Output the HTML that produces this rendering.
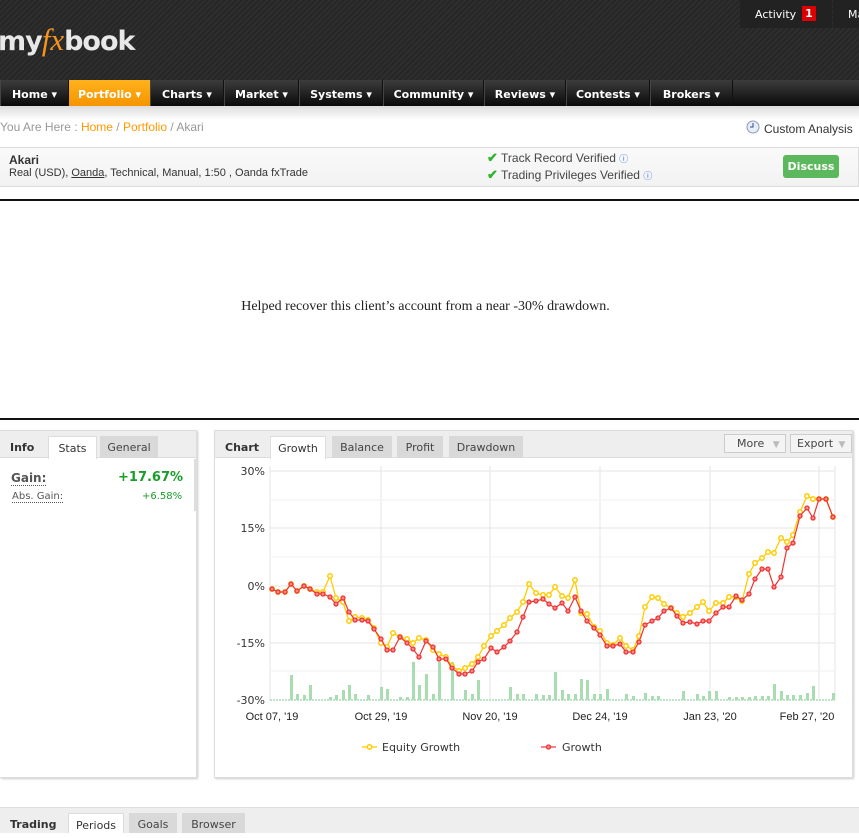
<!DOCTYPE html>
<html><head><meta charset="utf-8">
<style>
*{margin:0;padding:0;box-sizing:border-box}
body{width:859px;height:833px;overflow:hidden;background:#fff;font-family:"DejaVu Sans","Liberation Sans",sans-serif;position:relative}
.abs{position:absolute}
#hdr{left:0;top:0;width:859px;height:80px;background:repeating-linear-gradient(135deg,#2e2e2e 0 2px,#262626 2px 4px)}
#logo{left:-2px;top:22px;font:bold 27px "DejaVu Sans",sans-serif;color:#e8e8e8;letter-spacing:-1px}
#logo i{color:#f7941d;font-family:"Liberation Serif",serif;font-style:italic;font-weight:normal;font-size:31px;letter-spacing:0}
#act{left:740px;top:0;width:92px;height:28px;background:#222;color:#fff;font-size:11px;padding:8px 0 0 15px}
#act b{position:absolute;left:62px;top:6px;width:14px;height:15px;background:#d00;color:#fff;text-align:center;font-size:11px;line-height:15px}
#ma{left:833px;top:0;width:30px;height:28px;background:#222;color:#fff;font-size:11px;padding:8px 0 0 15px}
#nav{left:0;top:80px;width:859px;height:26px;background:linear-gradient(#3c3c3c,#0a0a0a)}
#nav div{position:absolute;top:0;height:26px;color:#fff;font-weight:bold;font-size:11px;line-height:29px;text-align:center;border-right:1px solid #111;border-left:1px solid #444}
#nav .on{background:linear-gradient(#ffb21c,#f59400);border:none}
#crumb{left:0;top:106px;width:859px;height:40px;background:linear-gradient(#ddd,#fff 14px)}
#crumb span.t{position:absolute;left:0;top:14px;font-size:12px;color:#999;font-family:"Liberation Sans",sans-serif}
#crumb a{color:#f90;text-decoration:none}
#info{left:0;top:147px;width:859px;height:40px;border:1px solid #ddd;border-left:none;background:linear-gradient(#fafafa,#f2f2f2)}
.ck{color:#2db52d;font-weight:bold;font-size:13px}
</style></head><body>
<div id="hdr" class="abs"></div>
<div id="logo" class="abs">my<i>fx</i>book</div>
<div id="act" class="abs">Activity<b>1</b></div>
<div id="ma" class="abs">Ma</div>
<div id="nav" class="abs">
<div style="left:0;width:69px">Home ▾</div>
<div class="on" style="left:69px;width:81px">Portfolio ▾</div>
<div style="left:150px;width:74px">Charts ▾</div>
<div style="left:224px;width:75px">Market ▾</div>
<div style="left:299px;width:84px">Systems ▾</div>
<div style="left:383px;width:101px">Community ▾</div>
<div style="left:484px;width:82px">Reviews ▾</div>
<div style="left:566px;width:84px">Contests ▾</div>
<div style="left:650px;width:83px">Brokers ▾</div>
</div>
<div id="crumb" class="abs"><span class="t">You Are Here : <a>Home</a> / <a>Portfolio</a> / Akari</span>
<svg class="abs" style="left:746px;top:14px" width="14" height="14"><circle cx="7" cy="7" r="6" fill="#e8eef8" stroke="#8a9ab8"/><path d="M7 3V7H4" stroke="#2a4a9a" fill="none"/></svg>
<span class="abs" style="left:764px;top:16px;font:12px 'Liberation Sans',sans-serif;color:#333">Custom Analysis</span></div>
<div id="info" class="abs">
<div class="abs" style="left:9px;top:5px;font:bold 12px 'Liberation Sans',sans-serif;color:#333">Akari</div>
<div class="abs" style="left:9px;top:19px;font:11px 'Liberation Sans',sans-serif;color:#333">Real (USD), <u>Oanda</u>, Technical, Manual, 1:50 , Oanda fxTrade</div>
<div class="abs" style="left:487px;top:2px;font:12px 'Liberation Sans',sans-serif;color:#444"><span class="ck">✔</span> Track Record Verified <span style="color:#36c;font-size:9px">ⓘ</span></div>
<div class="abs" style="left:487px;top:19px;font:12px 'Liberation Sans',sans-serif;color:#444"><span class="ck">✔</span> Trading Privileges Verified <span style="color:#36c;font-size:9px">ⓘ</span></div>
<div class="abs" style="left:783px;top:7px;width:56px;height:23px;background:#5cb85c;border-radius:3px;color:#fff;font-weight:bold;font-size:11px;text-align:center;line-height:23px">Discuss</div>
</div>
<div class="abs" style="left:0;top:199px;width:859px;height:2px;background:#111"></div>
<div class="abs" style="left:0;top:299px;width:859px;text-align:center;font:14px 'Liberation Serif',serif;color:#222;padding-right:8px">Helped recover this client’s account from a near -30% drawdown.</div>
<div class="abs" style="left:0;top:418px;width:859px;height:2px;background:#111"></div>

<div class="abs" style="left:0;top:430px;width:197px;height:348px;border:1px solid #ddd;border-left:none;box-shadow:1px 1px 2px #ccc;background:#fff">
<div class="abs" style="left:0;top:0;width:196px;height:27px;background:#eee;border-bottom:1px solid #ddd"></div>
<div class="abs" style="left:10px;top:10px;font-weight:bold;font-size:11px;color:#333">Info</div>
<div class="abs" style="left:48px;top:5px;width:49px;height:23px;background:#fff;border:1px solid #ddd;border-bottom:none;font-size:11px;color:#333;text-align:center;line-height:24px">Stats</div>
<div class="abs" style="left:100px;top:5px;width:58px;height:22px;background:#d9d9d9;font-size:11px;color:#444;text-align:center;line-height:24px">General</div>
<div class="abs" style="left:11px;top:40px;font-weight:bold;font-size:12px;color:#555;border-bottom:1px dotted #555">Gain:</div>
<div class="abs" style="left:118px;top:39px;font-weight:bold;font-size:13px;color:#1a9e2a">+17.67%</div>
<div class="abs" style="left:12px;top:60px;font-size:10px;color:#555;border-bottom:1px dotted #555">Abs. Gain:</div>
<div class="abs" style="left:142px;top:60px;font-size:10px;color:#1a9e2a">+6.58%</div>
<div class="abs" style="left:194px;top:28px;width:3px;height:52px;background:#ddd"></div>
</div>

<div class="abs" style="left:214px;top:430px;width:639px;height:348px;border:1px solid #ddd;box-shadow:1px 1px 2px #ccc;background:#fff">
<div class="abs" style="left:0;top:0;width:637px;height:27px;background:#eee;border-bottom:1px solid #ddd"></div>
<div class="abs" style="left:10px;top:10px;font-weight:bold;font-size:11px;color:#333">Chart</div>
<div class="abs" style="left:55px;top:5px;width:56px;height:23px;background:#fff;border:1px solid #ddd;border-bottom:none;font-size:11px;color:#333;text-align:center;line-height:24px">Growth</div>
<div class="abs" style="left:117px;top:5px;width:60px;height:22px;background:#d9d9d9;font-size:11px;color:#444;text-align:center;line-height:24px">Balance</div>
<div class="abs" style="left:182px;top:5px;width:46px;height:22px;background:#d9d9d9;font-size:11px;color:#444;text-align:center;line-height:24px">Profit</div>
<div class="abs" style="left:234px;top:5px;width:74px;height:22px;background:#d9d9d9;font-size:11px;color:#444;text-align:center;line-height:24px">Drawdown</div>
<div class="abs" style="left:509px;top:3px;width:62px;height:19px;background:#f4f4f4;border:1px solid #ccc;font-size:11px;color:#444;line-height:18px;padding-left:12px">More <span style="color:#bbb;font-size:9px;margin-left:5px">▼</span></div>
<div class="abs" style="left:575px;top:3px;width:62px;height:19px;background:#f4f4f4;border:1px solid #ccc;font-size:11px;color:#444;line-height:18px;padding-left:6px">Export <span style="color:#bbb;font-size:9px;margin-left:2px">▼</span></div>
</div>
<svg class="abs" style="left:0;top:0" width="859" height="833" font-family="DejaVu Sans,sans-serif" font-size="11" fill="#333">
<defs>
<marker id="my" markerUnits="userSpaceOnUse" markerWidth="7" markerHeight="7" refX="3.5" refY="3.5"><circle cx="3.5" cy="3.5" r="2.2" fill="#fff" stroke="#fc0" stroke-width="1.5"/></marker>
<marker id="mr" markerUnits="userSpaceOnUse" markerWidth="7" markerHeight="7" refX="3.5" refY="3.5"><circle cx="3.5" cy="3.5" r="2" fill="#f88" stroke="#e33" stroke-width="1.3"/></marker>
</defs>
<g stroke="#e6e6e6" stroke-width="1">
<line x1="270" y1="471" x2="835" y2="471"/><line x1="270" y1="528" x2="835" y2="528"/><line x1="270" y1="586" x2="835" y2="586"/><line x1="270" y1="643" x2="835" y2="643"/>
<line x1="270" y1="466" x2="270" y2="701"/><line x1="381" y1="466" x2="381" y2="701"/><line x1="490" y1="466" x2="490" y2="701"/><line x1="600" y1="466" x2="600" y2="701"/><line x1="710" y1="466" x2="710" y2="701"/><line x1="819" y1="466" x2="819" y2="701"/><line x1="835" y1="466" x2="835" y2="701"/>
</g>
<g stroke="#f2f2f2"><line x1="270" y1="500" x2="835" y2="500"/><line x1="270" y1="557" x2="835" y2="557"/><line x1="270" y1="614" x2="835" y2="614"/><line x1="270" y1="671" x2="835" y2="671"/></g>
<line x1="270" y1="700" x2="835" y2="700" stroke="#bfe3c6" stroke-width="2" stroke-dasharray="2 1"/>
<g fill="#a9dcb1">
<rect x="290" y="675" width="3" height="25"/><rect x="296" y="694" width="3" height="6"/><rect x="303" y="695" width="3" height="5"/><rect x="309" y="685" width="3" height="15"/><rect x="329" y="697" width="3" height="3"/><rect x="335" y="695" width="3" height="5"/><rect x="342" y="690" width="3" height="10"/><rect x="348" y="685" width="3" height="15"/><rect x="354" y="694" width="3" height="6"/><rect x="367" y="695" width="3" height="5"/><rect x="380" y="687" width="3" height="13"/><rect x="386" y="689" width="3" height="11"/><rect x="399" y="697" width="3" height="3"/><rect x="406" y="697" width="3" height="3"/><rect x="412" y="662" width="3" height="38"/><rect x="418" y="685" width="3" height="15"/><rect x="425" y="674" width="3" height="26"/><rect x="432" y="694" width="3" height="6"/><rect x="438" y="662" width="3" height="38"/><rect x="451" y="662" width="3" height="38"/><rect x="464" y="690" width="3" height="10"/><rect x="471" y="694" width="3" height="6"/><rect x="477" y="680" width="3" height="20"/><rect x="509" y="687" width="3" height="13"/><rect x="516" y="694" width="3" height="6"/><rect x="522" y="694" width="3" height="6"/><rect x="535" y="694" width="3" height="6"/><rect x="542" y="695" width="3" height="5"/><rect x="548" y="695" width="3" height="5"/><rect x="554" y="672" width="3" height="28"/><rect x="561" y="690" width="3" height="10"/><rect x="567" y="694" width="3" height="6"/><rect x="574" y="694" width="3" height="6"/><rect x="580" y="679" width="3" height="21"/><rect x="586" y="680" width="3" height="20"/><rect x="593" y="694" width="3" height="6"/><rect x="599" y="694" width="3" height="6"/><rect x="606" y="689" width="3" height="11"/><rect x="625" y="694" width="3" height="6"/><rect x="632" y="696" width="3" height="4"/><rect x="644" y="693" width="3" height="7"/><rect x="651" y="696" width="3" height="4"/><rect x="657" y="696" width="3" height="4"/><rect x="682" y="691" width="3" height="9"/><rect x="696" y="694" width="3" height="6"/><rect x="702" y="696" width="3" height="4"/><rect x="708" y="691" width="3" height="9"/><rect x="715" y="691" width="3" height="9"/><rect x="728" y="697" width="3" height="3"/><rect x="735" y="697" width="3" height="3"/><rect x="741" y="697" width="3" height="3"/><rect x="748" y="697" width="3" height="3"/><rect x="754" y="696" width="3" height="4"/><rect x="761" y="696" width="3" height="4"/><rect x="767" y="696" width="3" height="4"/><rect x="773" y="684" width="3" height="16"/><rect x="780" y="691" width="3" height="9"/><rect x="786" y="695" width="3" height="5"/><rect x="792" y="695" width="3" height="5"/><rect x="799" y="695" width="3" height="5"/><rect x="806" y="693" width="3" height="7"/><rect x="812" y="686" width="3" height="14"/><rect x="832" y="693" width="3" height="7"/>
</g>
<polyline fill="none" stroke="#fc0" stroke-width="1.3" marker-start="url(#my)" marker-mid="url(#my)" marker-end="url(#my)" points="272,589 278,592 285,592 291,584 297,591 304,586 310,589 317,592 323,592 330,576 336,598 343,602 349,621 355,617 362,618 368,620 374,628 381,643 387,647 393,633 400,637 407,639 413,643 419,638 426,640 433,650 439,654 446,657 452,666 459,671 465,668 472,664 478,657 484,646 491,636 497,631 504,625 510,618 517,612 523,602 529,584 536,593 543,595 549,595 555,587 562,596 568,598 575,580 581,613 587,614 594,627 600,631 607,643 613,645 620,638 626,646 633,650 639,636 645,607 652,597 658,598 664,604 671,608 677,613 683,617 690,613 697,607 703,602 709,611 716,603 723,603 729,597 736,597 742,601 749,574 755,563 762,558 768,552 774,553 781,538 787,542 793,535 800,512 807,496 813,499 819,499 826,499 833,517"/>
<polyline fill="none" stroke="#e33" stroke-width="1.2" marker-start="url(#mr)" marker-mid="url(#mr)" marker-end="url(#mr)" points="272,589 278,592 285,592 291,584 297,591 304,586 310,589 317,594 323,594 330,597 336,604 343,598 349,612 355,620 362,620 368,621 374,629 381,639 387,650 393,650 400,637 407,643 413,649 419,657 426,641 433,647 439,659 446,659 452,668 459,674 465,674 472,671 478,662 484,659 491,648 497,652 504,647 510,641 517,632 523,617 529,602 536,601 543,599 549,604 555,608 562,603 568,611 575,597 581,611 587,621 594,628 600,635 607,646 613,646 620,644 626,652 633,652 639,642 645,625 652,621 658,618 664,611 671,608 677,616 683,623 690,622 697,624 703,621 709,621 716,613 723,607 729,607 736,596 742,600 749,594 755,579 762,569 768,569 774,587 781,577 787,548 793,543 800,516 807,508 813,518 819,499 826,499 833,517"/>
<g text-anchor="end" font-size="11" fill="#333"><text x="265" y="475">30%</text><text x="265" y="532">15%</text><text x="265" y="590">0%</text><text x="265" y="647">-15%</text><text x="265" y="704">-30%</text></g>
<g text-anchor="middle" font-size="11" fill="#222" font-family="Liberation Sans,sans-serif"><text x="272" y="720">Oct 07, '19</text><text x="381" y="720">Oct 29, '19</text><text x="490" y="720">Nov 20, '19</text><text x="600" y="720">Dec 24, '19</text><text x="710" y="720">Jan 23, '20</text><text x="807" y="720">Feb 27, '20</text></g>
<line x1="362" y1="747" x2="377" y2="747" stroke="#fc0" stroke-width="1.3"/><circle cx="369.5" cy="747" r="2.2" fill="#fff" stroke="#fc0" stroke-width="1.5"/>
<text x="382" y="751" font-size="11">Equity Growth</text>
<line x1="541" y1="747" x2="556" y2="747" stroke="#e33" stroke-width="1.2"/><circle cx="548.5" cy="747" r="2" fill="#f88" stroke="#e33" stroke-width="1.3"/>
<text x="562" y="751" font-size="11">Growth</text>
</svg>

<div class="abs" style="left:0;top:807px;width:859px;height:26px;background:#eee;border-top:1px solid #ddd"></div>
<div class="abs" style="left:10px;top:818px;font-weight:bold;font-size:11px;color:#333">Trading</div>
<div class="abs" style="left:68px;top:813px;width:56px;height:20px;background:#fff;border:1px solid #ddd;border-bottom:none;font-size:11px;color:#333;text-align:center;line-height:24px">Periods</div>
<div class="abs" style="left:129px;top:813px;width:48px;height:20px;background:#d9d9d9;font-size:11px;color:#444;text-align:center;line-height:24px">Goals</div>
<div class="abs" style="left:182px;top:813px;width:63px;height:20px;background:#d9d9d9;font-size:11px;color:#444;text-align:center;line-height:24px">Browser</div>
</body></html>
